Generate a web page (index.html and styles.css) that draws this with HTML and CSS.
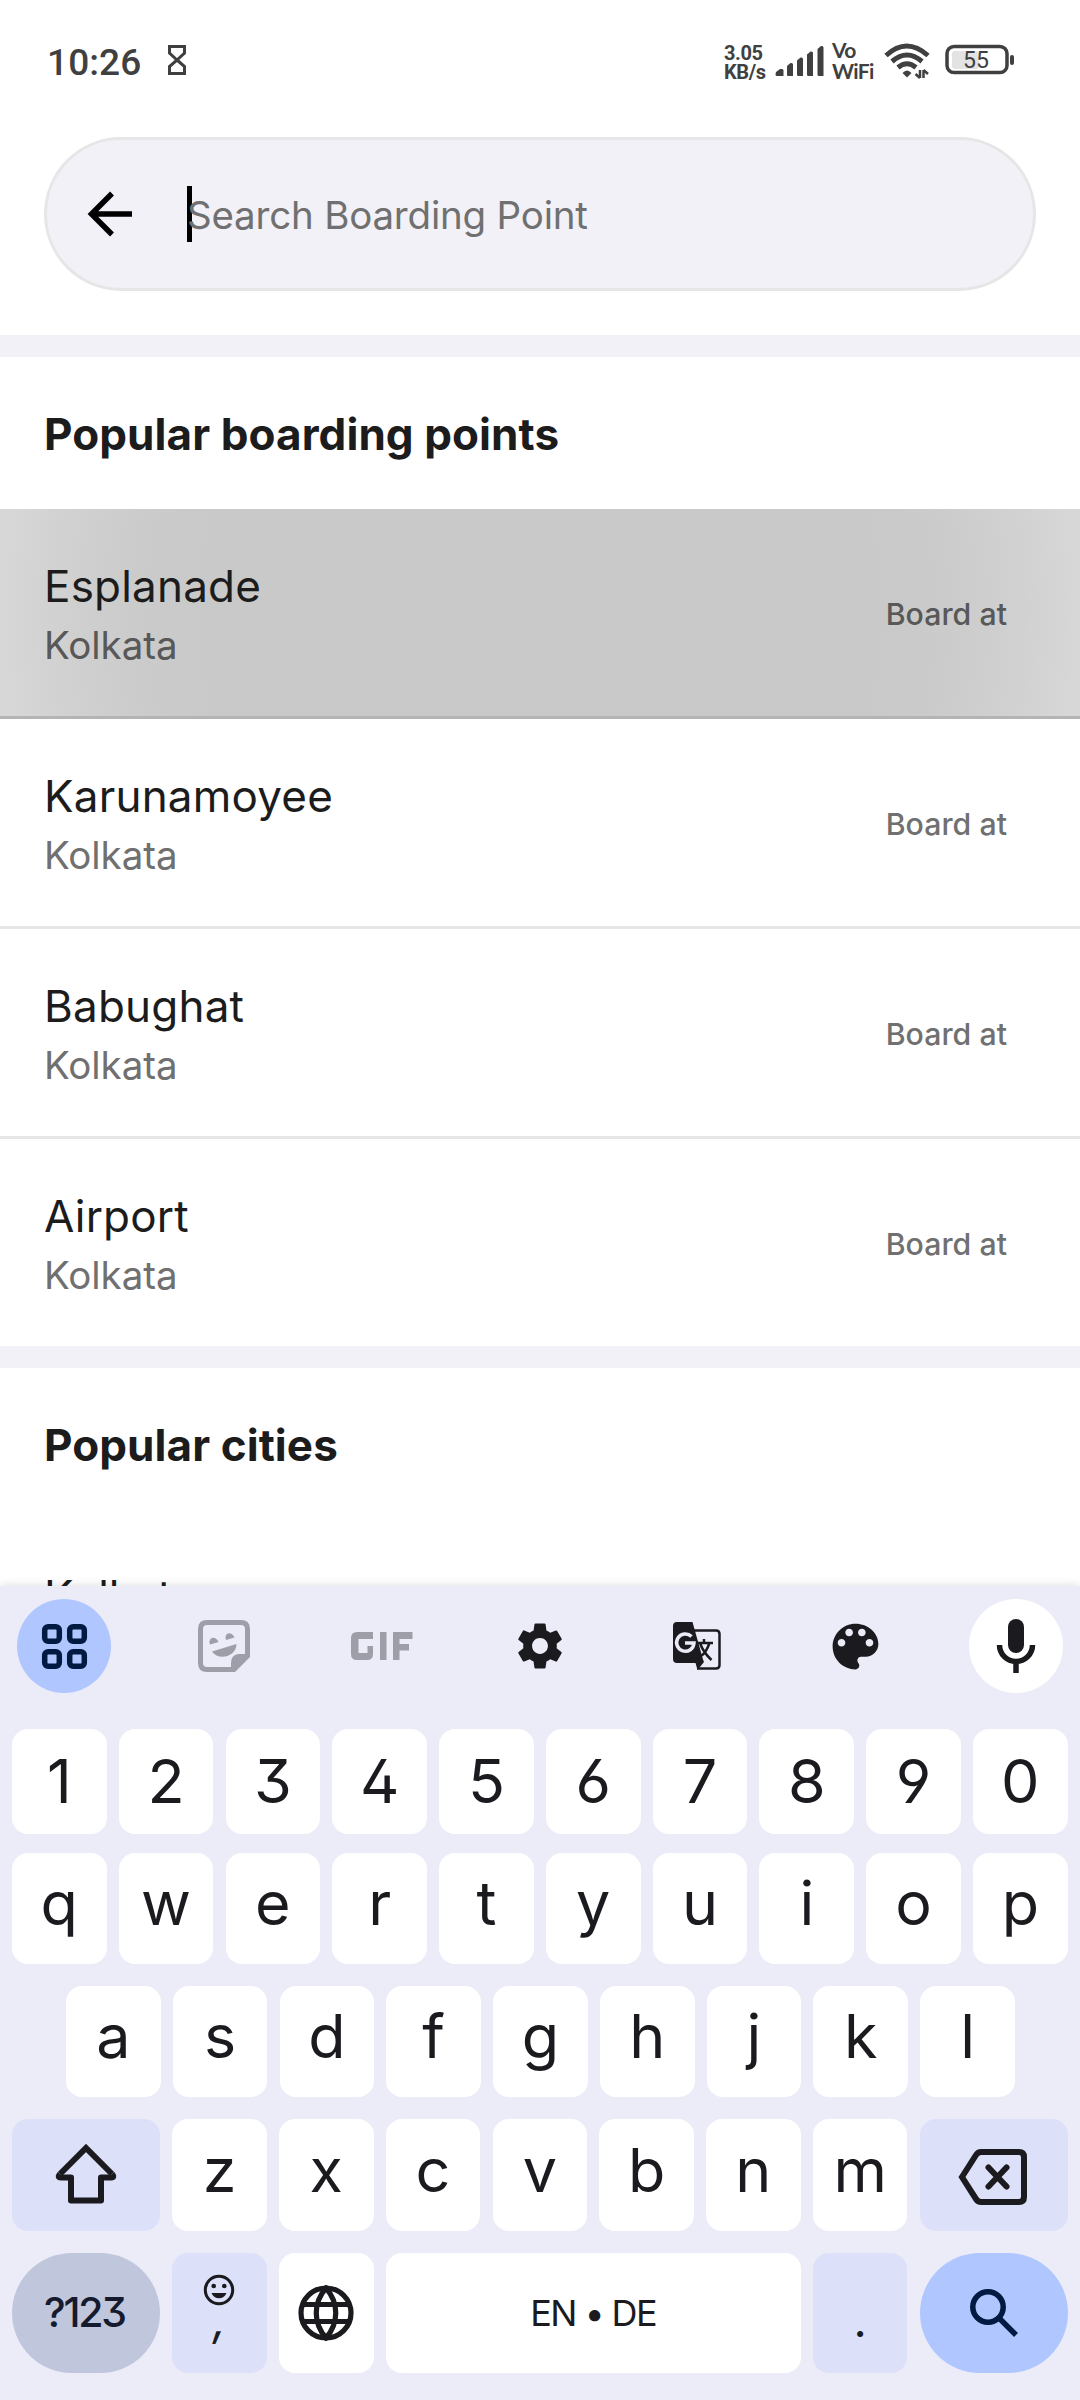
FILE: index.html
```html
<!DOCTYPE html>
<html lang="en">
<head>
<meta charset="utf-8">
<title>Search Boarding Point</title>
<link rel="stylesheet" href="styles.css">
</head>
<body>
<div class="screen">
  <header class="statusbar">
    <span class="clock">10:26</span>
    <svg class="hourglass" width="20" height="32" viewBox="0 0 20 32" fill="none" stroke="#404040" stroke-width="3"><path d="M2.5 2.500H17.500V9L10 16L2.500 9ZM10 16L17.500 22.500V29.500H2.500V22.500Z"/></svg>
    <div class="status-right">
      <div class="rate"><span>3.05</span><span>KB/s</span></div>
      <svg class="signal" width="50" height="32" viewBox="0 0 50 32" fill="#404040"><path d="M1 27l4-3h2q1.500 0 1.500 1.500V31H2q-1.500 0-1.500-1.500zM12 21l3.500-3q2.500-.5 2.500 1.500V31H13q-1 0-1-1.500zM22 15.500l3.500-3q2.500-.5 2.500 1.500V31h-4.500Q22 31 22 29.500zM32 9.500l3.500-3Q38 6 38 8v23h-4.500Q32 31 32 29.500zM42.500 4L46 1q2.500-.5 2.500 1.500V31H44q-1.500 0-1.500-1.500z"/></svg>
      <div class="vowifi"><span>Vo</span><span>WiFi</span></div>
      <svg class="wifi" width="46" height="36" viewBox="0 0 46 36"><g fill="none" stroke="#404040" stroke-width="5"><path d="M2 12.500Q22.500-6.500 44 12.500"/><path d="M8 18.500Q23 5.500 38 18.500"/><path d="M14 24.500Q23 17 32 24.500"/></g><path d="M18.500 30q4.500-5 9 0L23 34.500z" fill="#404040"/><path d="M36 27v8M31.500 31l4.500 4M39.500 35v-8M39.500 27l4.500 4" stroke="#404040" stroke-width="2.500" fill="none"/></svg>
      <svg class="battery" width="70" height="32" viewBox="0 0 70 32"><rect x="2" y="2.500" width="60" height="26" rx="7" fill="none" stroke="#404040" stroke-width="3.500"/><rect x="7" y="7" width="27" height="18" rx="3" fill="#e3e3e3"/><rect x="65" y="11" width="4" height="10" rx="2" fill="#404040"/><text class="battery-text" x="31" y="24" text-anchor="middle">55</text></svg>
    </div>
  </header>

  <div class="searchbar">
    <svg class="back" width="48" height="48" viewBox="0 0 48 48" fill="none" stroke="#000" stroke-width="5.500"><path d="M46 24H6M26 3.500L5.500 24L26 44.500"/></svg>
    <span class="caret"></span><span class="placeholder">Search Boarding Point</span>
  </div>
  <div class="band"></div>

  <main class="results">
    <h2 class="section-title">Popular boarding points</h2>
    <div class="row pressed"><div class="place"><span class="name">Esplanade</span><span class="city">Kolkata</span></div><span class="board">Board at</span></div>
    <div class="row"><div class="place"><span class="name">Karunamoyee</span><span class="city">Kolkata</span></div><span class="board">Board at</span></div>
    <div class="row"><div class="place"><span class="name">Babughat</span><span class="city">Kolkata</span></div><span class="board">Board at</span></div>
    <div class="row last"><div class="place"><span class="name">Airport</span><span class="city">Kolkata</span></div><span class="board">Board at</span></div>
    <div class="band"></div>
    <h2 class="section-title">Popular cities</h2>
    <div class="city-row">Kolkata</div>
  </main>

  <section class="keyboard">
    <div class="toolbar">
      <span class="tool round blue"><svg width="48" height="48" viewBox="0 0 48 48" fill="none" stroke="#001a41" stroke-width="5.500"><rect x="4.700" y="4.700" width="14.600" height="14.600" rx="3.500"/><rect x="29.700" y="4.700" width="14.600" height="14.600" rx="3.500"/><rect x="4.700" y="29.700" width="14.600" height="14.600" rx="3.500"/><rect x="29.700" y="29.700" width="14.600" height="14.600" rx="3.500"/></svg></span>
      <span class="tool sticker"><svg width="52" height="52" viewBox="0 0 52 52"><path d="M9 2.500H43Q49.500 2.500 49.500 9V36L36 49.500H9Q2.500 49.500 2.500 43V9Q2.500 2.500 9 2.500Z" fill="none" stroke="#9e9ea8" stroke-width="5"/><path d="M33 51V43Q33 34 42 34H51V37L37 51Z" fill="#9e9ea8"/><path d="M12 24.500C9.500 18 17 14.500 20.500 22ZM28 20C25.500 13.500 33 10 36.500 17.500ZM14 31.500L38.500 24C38.500 37 20 41 14 31.500Z" fill="#9e9ea8"/></svg></span>
      <span class="tool sticker"><svg width="62" height="28" viewBox="0 0 62 28" fill="#9e9ea8"><path d="M6 0H22V7H7.500V21H16.500V14H22V22Q22 28 16 28H6Q0 28 0 22V6Q0 0 6 0ZM29 0h6.500v28H29zM42 0H61.500V7H48.500V12H58V18.500H48.500V28H42Z"/></svg></span>
      <span class="tool"><svg width="56" height="56" viewBox="0 0 24 24" fill="#1b1b1f"><path d="M19.140 12.940c.04-.3.060-.61.060-.94 0-.32-.02-.64-.07-.94l2.030-1.580c.18-.14.23-.41.120-.61l-1.920-3.320c-.12-.22-.37-.29-.59-.22l-2.390.96c-.5-.38-1.030-.7-1.620-.94l-.36-2.540c-.04-.24-.24-.41-.48-.41h-3.840c-.24 0-.43.170-.47.410l-.36 2.540c-.59.240-1.130.570-1.620.940l-2.390-.96c-.22-.08-.47 0-.59.220L2.740 8.870c-.12.210-.08.470.12.610l2.030 1.580c-.05.3-.09.630-.09.940s.02.640.07.940l-2.030 1.580c-.18.140-.23.410-.12.610l1.920 3.320c.12.220.37.290.59.220l2.390-.96c.5.380 1.030.7 1.620.940l.36 2.540c.05.240.24.410.48.410h3.840c.24 0 .44-.17.47-.41l.36-2.540c.59-.24 1.130-.56 1.620-.94l2.390.96c.22.080.47 0 .59-.22l1.920-3.320c.12-.22.070-.47-.12-.61l-2.010-1.580zM12 15.400c-1.880 0-3.400-1.520-3.400-3.400s1.520-3.400 3.400-3.400 3.400 1.520 3.400 3.400-1.520 3.400-3.400 3.400z"/></svg></span>
      <span class="tool nudge"><svg width="50" height="50" viewBox="0 0 50 50"><path d="M20 9.500H44Q47.500 9.500 47.500 13V44Q47.500 47.500 44 47.500H25" fill="none" stroke="#1b1b1f" stroke-width="2.500"/><path d="M5 1H20.500L31 38.500L32 41L25.500 49L23.500 42H5Q1 42 1 38V5Q1 1 5 1Z" fill="#1b1b1f"/><path d="M19.500 15.500A8.700 8.700 0 1 0 22 22H13" fill="none" stroke="#ececf8" stroke-width="3.500"/><path d="M24.500 22H41M32 18v4M28 22Q31 31 39.500 39M37.500 22Q34 32 29 35" fill="none" stroke="#1b1b1f" stroke-width="2.500"/></svg></span>
      <span class="tool nudge"><svg width="61" height="61" viewBox="0 0 24 24" fill="#1b1b1f"><path d="M12 3c-4.970 0-9 4.030-9 9s4.030 9 9 9c.83 0 1.500-.67 1.500-1.500 0-.39-.15-.74-.39-1.010-.23-.26-.38-.61-.38-.99 0-.83.670-1.500 1.500-1.500H16c2.760 0 5-2.240 5-5 0-4.420-4.030-8-9-8zm-5.500 9c-.83 0-1.500-.67-1.500-1.500S5.670 9 6.500 9 8 9.670 8 10.500 7.330 12 6.500 12zm3-4C8.670 8 8 7.330 8 6.500S8.670 5 9.500 5s1.500.67 1.500 1.500S10.330 8 9.500 8zm5 0c-.83 0-1.500-.67-1.500-1.500S13.670 5 14.500 5s1.500.67 1.500 1.500S15.330 8 14.500 8zm3 4c-.83 0-1.500-.67-1.500-1.500S16.670 9 17.500 9s1.500.67 1.500 1.500-.67 1.500-1.500 1.500z"/></svg></span>
      <span class="tool round white"><svg width="40" height="54" viewBox="0 0 40 54"><rect x="12" y="0" width="16" height="34" rx="8" fill="#1b1b1f"/><path d="M3.500 26A16.500 16.500 0 0 0 36.500 26M20 43V54" fill="none" stroke="#1b1b1f" stroke-width="5.500"/></svg></span>
    </div>

    <div class="keys numbers"><kbd>1</kbd><kbd>2</kbd><kbd>3</kbd><kbd>4</kbd><kbd>5</kbd><kbd>6</kbd><kbd>7</kbd><kbd>8</kbd><kbd>9</kbd><kbd>0</kbd></div>
    <div class="keys letters"><kbd>q</kbd><kbd>w</kbd><kbd>e</kbd><kbd>r</kbd><kbd>t</kbd><kbd>y</kbd><kbd>u</kbd><kbd>i</kbd><kbd>o</kbd><kbd>p</kbd></div>
    <div class="keys letters home"><kbd>a</kbd><kbd>s</kbd><kbd>d</kbd><kbd>f</kbd><kbd>g</kbd><kbd>h</kbd><kbd>j</kbd><kbd>k</kbd><kbd>l</kbd></div>
    <div class="keys letters lower">
      <kbd class="wide tint shift"><svg width="62" height="62" viewBox="0 0 62 62" fill="none" stroke="#1b1b1f" stroke-width="6" stroke-linejoin="round"><path stroke-linejoin="miter" d="M5 31L31 5L57 31"/><path d="M5 31Q2 34.500 6 34.500H16V57.500H46V34.500H56Q60 34.500 57 31"/></svg></kbd>
      <kbd>z</kbd><kbd>x</kbd><kbd>c</kbd><kbd>v</kbd><kbd>b</kbd><kbd>n</kbd><kbd>m</kbd>
      <kbd class="wide tint delete"><svg width="70" height="56" viewBox="0 0 70 56" fill="none" stroke="#1b1b1f" stroke-width="6"><path d="M4 28L18 6Q20 3 23 3H61Q66 3 66 8V48Q66 53 61 53H23Q20 53 18 50Z"/><path d="M30.500 18.500L48.500 37.500M48.500 18.500L30.500 37.500" stroke-linecap="round"/></svg></kbd>
    </div>
    <div class="keys bottom">
      <kbd class="wide symbols">?123</kbd>
      <kbd class="tint comma"><svg width="32" height="32" viewBox="0 0 32 32"><circle cx="16" cy="16" r="13.700" fill="none" stroke="#1b1b1f" stroke-width="3"/><circle cx="10.700" cy="12" r="2.300" fill="#1b1b1f"/><circle cx="21.300" cy="12" r="2.300" fill="#1b1b1f"/><path d="M8.500 19H23.500C21 26 11 26 8.500 19Z" fill="#1b1b1f"/></svg><span>,</span></kbd>
      <kbd><svg width="56" height="56" viewBox="0 0 56 56" fill="none" stroke="#1b1b1f" stroke-width="5.200"><circle cx="28" cy="28" r="25"/><path d="M4 19.500H52M4 36.500H52M28 3C15 18 15 38 28 53C41 38 41 18 28 3Z"/></svg></kbd>
      <kbd class="space">EN • DE</kbd>
      <kbd class="tint period">.</kbd>
      <kbd class="wide search"><svg width="48" height="48" viewBox="0 0 48 48" fill="none" stroke="#001a41" stroke-width="5.500"><circle cx="18" cy="18" r="15.200"/><path d="M29 29L46 46"/></svg></kbd>
    </div>
  </section>
</div>
</body>
</html>
```

FILE: styles.css
```css
* { box-sizing: border-box; }
body { margin: 0; background: #fff; }
svg { display: block; flex: none; }

.screen {
  width: 1080px;
  height: 2400px;
  overflow: hidden;
  display: flex;
  flex-direction: column;
  font-family: Inter, sans-serif;
  color: #1c1c1c;
}

.statusbar {
  height: 137px;
  flex: none;
  padding: 44px 65px 0 47px;
  display: flex;
  align-items: flex-start;
  color: #404040;
  font-family: Roboto, sans-serif;
}
.clock { font-size: 37px; line-height: 38px; font-weight: 500; letter-spacing: 0.1px; }
.hourglass { margin: 0 0 0 26px; }
.status-right { margin-left: auto; display: flex; align-items: flex-start; }
.rate { display: flex; flex-direction: column; font-size: 20px; line-height: 19px; font-weight: 700; width: 51px; letter-spacing: -0.4px; }
.signal { margin: 1px 7px 0 0; }
.vowifi { display: flex; flex-direction: column; font: 700 21px/21px Lato, sans-serif; letter-spacing: -0.7px; width: 52px; margin-top: -5px; }
.wifi { margin-top: -1px; }
.battery { margin: 0 0 0 15px; }
.battery-text { font: 400 23px Roboto, sans-serif; fill: #404040; }

.searchbar {
  flex: none;
  height: 154px;
  margin: 0 44px 44px;
  padding-left: 39px;
  border: 3px solid #e6e6e6;
  border-radius: 77px;
  background: #f2f1f8;
  display: flex;
  align-items: center;
}
.caret { width: 5px; height: 56px; background: #000; margin-left: 53px; }
.placeholder { font-size: 38.5px; font-weight: 430; color: #707070; margin-left: -5px; padding-top: 1px; letter-spacing: -0.2px; }

.band { height: 22px; flex: none; background: #f2f1f8; }
.results { height: 1229px; flex: none; overflow: hidden; display: flex; flex-direction: column; }
.section-title { margin: 0; height: 152px; flex: none; padding-left: 44px; font-size: 44px; line-height: 154px; font-weight: 700; letter-spacing: 0.08px; }
.row {
  height: 210px;
  flex: none;
  padding: 0 73px 0 44px;
  border-bottom: 3px solid #e6e6e6;
  display: flex;
  align-items: center;
  justify-content: space-between;
}
.row.last { height: 207px; border-bottom: 0; }
.row.pressed {
  border-bottom-color: #b4b4b4;
  background: radial-gradient(circle at 540px 104px, #c9c9c9 340px, #cbcbcb 400px, #cfcfcf 460px, #d7d7d7 540px);
}
.place { display: flex; flex-direction: column; padding-top: 6px; }
.name { font-size: 44px; line-height: 59px; font-weight: 430; letter-spacing: 0.2px; }
.city { font-size: 38.5px; line-height: 58px; font-weight: 370; letter-spacing: -0.05px; color: #707070; }
.pressed .city, .pressed .board { color: #585858; }
.board { font-size: 30.25px; font-weight: 500; color: #707070; letter-spacing: 0.05px; padding-top: 2px; }
.city-row { font-size: 44px; line-height: 56px; font-weight: 430; margin-top: 48px; padding-left: 44px; flex: none; }

.keyboard {
  position: relative;
  height: 814px;
  flex: none;
  background: #ececf8;
  box-shadow: 0 0 9px rgba(0, 0, 0, 0.15);
  padding: 13px 12px 27px;
  display: flex;
  flex-direction: column;
  gap: 22px;
  color: #1b1b1f;
}
.toolbar { height: 94px; margin: 0 5px 14px; display: flex; justify-content: space-between; }
.tool { width: 94px; height: 94px; display: flex; align-items: center; justify-content: center; }
.sticker { padding-left: 2px; }
.nudge { padding-right: 3px; }
.round { border-radius: 50%; }
.blue { background: #b0c6ff; }
.white { background: #fff; }

.keys { display: flex; gap: 12.2px; height: 111px; }
.numbers { height: 105px; margin-bottom: -3px; }
.home { padding-left: 54px; }
.keys.lower { height: 112px; }
.bottom { height: 120px; }
kbd {
  width: 94.6px;
  flex: none;
  border-radius: 16px;
  background: #fff;
  display: flex;
  align-items: center;
  justify-content: center;
  font: 400 61px/1 Inter, sans-serif;
  font-feature-settings: "cv03", "cv04", "ss01";
}
.letters kbd { padding-bottom: 10px; }
.wide { width: 148px; }
.tint { background: #dce1f9; }
.letters .shift { padding: 0 1px 2px 0; }
.letters .delete { padding: 4px 2px 0 0; }
.symbols { background: #c0c6dc; border-radius: 60px; font-size: 41px; font-weight: 500; letter-spacing: -2.2px; padding: 0 3px 2px 0; color: #151b2c; }
.comma { flex-direction: column; justify-content: flex-start; padding-top: 21px; font-size: 46px; }
.comma span { line-height: 46px; margin-top: -10px; font-style: italic; }
.space { width: 414.800px; font-size: 36px; letter-spacing: -1.6px; }
.period { font-size: 46px; padding-top: 14px; }
.search { background: #b0c6ff; border-radius: 60px; }
```
